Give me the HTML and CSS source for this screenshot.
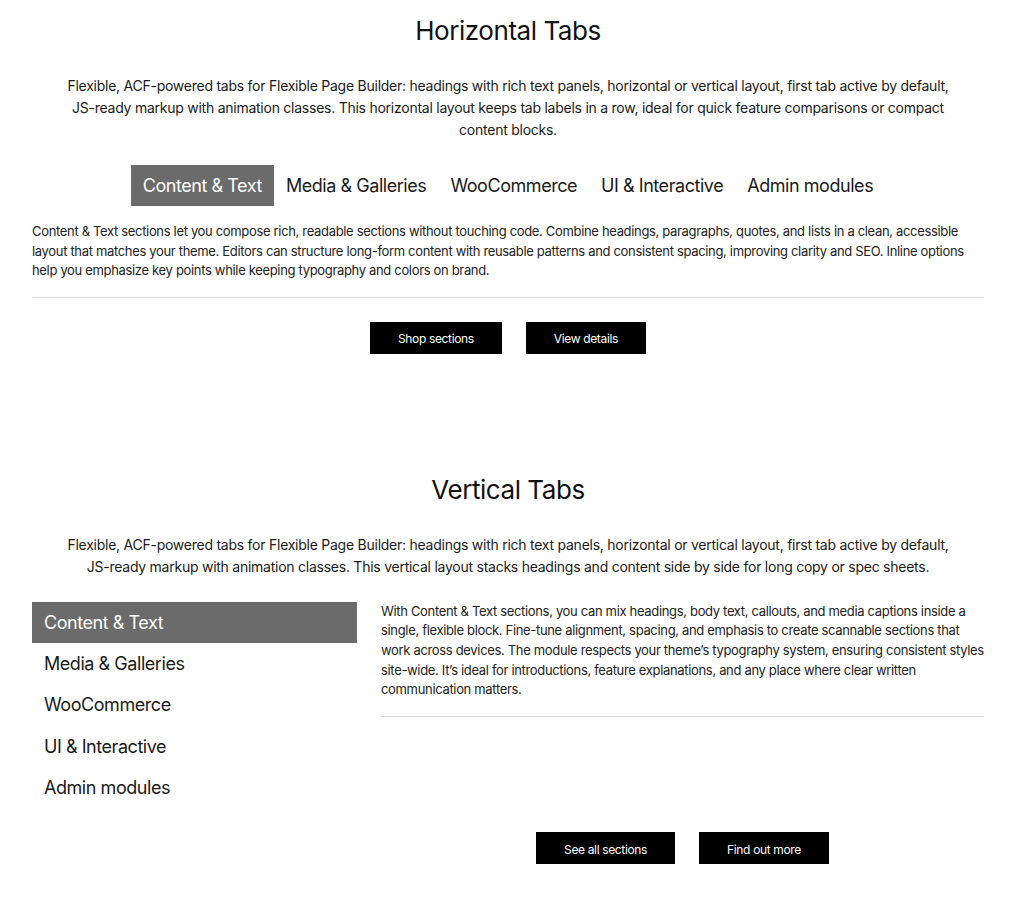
FILE: index.html
```html
<!DOCTYPE html>
<html lang="en">

<head>
    <meta charset="UTF-8">
    <title>Tabs</title>
    <link rel="stylesheet" href="styles.css">
</head>

<body>

    <section class="tabs-block">
        <h2 class="tabs-title">Horizontal Tabs</h2>
        <p class="tabs-intro">Flexible, ACF-powered tabs for Flexible Page Builder: headings with rich text panels, horizontal or vertical layout, first tab active by default, JS-ready markup with animation classes. This horizontal layout keeps tab labels in a row, ideal for quick feature comparisons or compact content blocks.</p>

        <div class="tabs tabs-horizontal">
            <ul class="tab-list">
                <li class="tab active">Content &amp; Text</li>
                <li class="tab">Media &amp; Galleries</li>
                <li class="tab">WooCommerce</li>
                <li class="tab">UI &amp; Interactive</li>
                <li class="tab">Admin modules</li>
            </ul>
            <div class="tab-panel">
                <p>Content &amp; Text sections let you compose rich, readable sections without touching code. Combine headings, paragraphs, quotes, and lists in a clean, accessible layout that matches your theme. Editors can structure long-form content with reusable patterns and consistent spacing, improving clarity and SEO. Inline options help you emphasize key points while keeping typography and colors on brand.</p>
            </div>
            <div class="tab-buttons">
                <a class="btn" href="#">Shop sections</a>
                <a class="btn" href="#">View details</a>
            </div>
        </div>
    </section>

    <section class="tabs-block">
        <h2 class="tabs-title">Vertical Tabs</h2>
        <p class="tabs-intro">Flexible, ACF-powered tabs for Flexible Page Builder: headings with rich text panels, horizontal or vertical layout, first tab active by default, JS-ready markup with animation classes. This vertical layout stacks headings and content side by side for long copy or spec sheets.</p>

        <div class="tabs tabs-vertical">
            <ul class="tab-list">
                <li class="tab active">Content &amp; Text</li>
                <li class="tab">Media &amp; Galleries</li>
                <li class="tab">WooCommerce</li>
                <li class="tab">UI &amp; Interactive</li>
                <li class="tab">Admin modules</li>
            </ul>
            <div class="tab-panel">
                <p>With Content &amp; Text sections, you can mix headings, body text, callouts, and media captions inside a single, flexible block. Fine-tune alignment, spacing, and emphasis to create scannable sections that work across devices. The module respects your theme’s typography system, ensuring consistent styles site-wide. It’s ideal for introductions, feature explanations, and any place where clear written communication matters.</p>
            </div>
            <div class="tab-buttons">
                <a class="btn" href="#">See all sections</a>
                <a class="btn" href="#">Find out more</a>
            </div>
        </div>
    </section>

</body>

</html>
```

FILE: styles.css
```css
body {
    margin: 0;
    font-family: Inter, 'Noto Sans', sans-serif;
    color: #1a1a1a;
    background: #fff;
}

.tabs-block {
    width: 952px;
    padding: 15px 40px 0 32px;
}

.tabs-block + .tabs-block {
    padding-top: 120px;
}

.tabs-title {
    margin: 0;
    font-size: 26px;
    line-height: 32px;
    font-weight: 400;
    letter-spacing: -0.45px;
    text-align: center;
    color: #111;
}

.tabs-intro {
    max-width: 900px;
    margin: 28px auto 24px;
    font-size: 14px;
    line-height: 22px;
    letter-spacing: -0.25px;
    text-align: center;
    color: #1a1a1a;
}

.tab-list {
    list-style: none;
    margin: 0;
    padding: 0;
}

.tab {
    padding: 10px 12px;
    font-size: 18px;
    line-height: 21px;
    letter-spacing: -0.45px;
    color: #1a1a1a;
    cursor: pointer;
}

.tab.active {
    background: #6b6b6b;
    color: #fff;
}

.tab-panel {
    align-self: start;
    padding-bottom: 16px;
    border-bottom: 1px solid #dcdcdc;
}

.tab-panel p {
    margin: 0;
    font-size: 13px;
    line-height: 19.6px;
    letter-spacing: -0.33px;
    color: #222;
}

.tab-buttons {
    display: flex;
    justify-content: center;
    gap: 24px;
}

.btn {
    display: inline-flex;
    align-items: center;
    box-sizing: border-box;
    height: 32px;
    padding: 2px 28px 0;
    background: #000;
    color: #fff;
    font-size: 12px;
    letter-spacing: -0.35px;
    text-decoration: none;
}

/* horizontal: labels in one row above the panel */
.tabs-horizontal .tab-list {
    display: flex;
    justify-content: center;
    margin-bottom: 16px;
}

.tabs-horizontal .tab-buttons {
    margin-top: 24px;
}

/* vertical: labels on the left, panel and buttons on the right */
.tabs-vertical {
    display: grid;
    grid-template-columns: 325px 1fr;
    column-gap: 24px;
    row-gap: 24px;
}

.tabs-vertical .tab {
    line-height: 21.3px;
}

.tabs-vertical .tab-buttons {
    grid-column: 2;
}
```
